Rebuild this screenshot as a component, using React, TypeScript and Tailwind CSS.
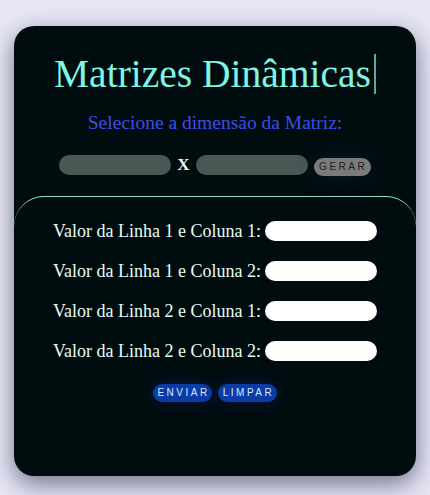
import React from "react";

export default function App() {
  const rows = [
    "Valor da Linha 1 e Coluna 1:",
    "Valor da Linha 1 e Coluna 2:",
    "Valor da Linha 2 e Coluna 1:",
    "Valor da Linha 2 e Coluna 2:",
  ];
  const serif = { fontFamily: '"Liberation Serif", "Times New Roman", serif' };
  const sans = { fontFamily: '"Liberation Sans", Arial, sans-serif' };
  return (
    <div className="min-h-screen bg-[#e6e6f6] px-[14px] pt-[26px]">
      <div className="h-[450px] rounded-[20px] bg-[#010c0f] shadow-[0_8px_24px_rgba(20,20,50,0.55)] flex flex-col items-center">
        <h1
          className="mt-[28px] text-[39.5px] leading-[40px] text-[#7ff5e6] border-r-2 border-[#5fa89c] pr-[3px]"
          style={serif}
        >
          Matrizes Dinâmicas
        </h1>
        <p className="mt-[17px] text-[19.5px] leading-[24px] text-[#3a4fe6]" style={serif}>
          Selecione a dimensão da Matriz:
        </p>
        <div className="mt-[20px] flex items-start">
          <input className="w-[112px] h-[20px] rounded-full bg-[#4b5755] outline-none" />
          <span
            className="mx-[6px] text-[17px] font-bold leading-[20px] text-[#e8fff8]"
            style={serif}
          >
            X
          </span>
          <input className="w-[112px] h-[20px] rounded-full bg-[#4b5755] outline-none" />
          <button
            className="ml-[6px] mt-[3px] w-[57px] h-[18px] rounded-full bg-[#7b7b7b] text-[10px] leading-[18px] tracking-[2.5px] pl-[2px] text-[#1c1c1c] shadow-[0_0_20px_rgba(20,60,90,0.35)]"
            style={sans}
          >
            GERAR
          </button>
        </div>
        <div className="mt-[20px] w-full border-t border-[#8ee0d2] rounded-t-[30px] flex flex-col items-center pt-[24px] gap-[20px]">
          {rows.map((r) => (
            <div key={r} className="flex items-center">
              <span className="text-[18px] leading-[20px] text-[#e4fff4]" style={serif}>
                {r}
              </span>
              <input className="ml-[4px] w-[112px] h-[20px] rounded-full bg-white outline-none" />
            </div>
          ))}
          <div className="mt-[3px] flex gap-[6px]">
            <button
              className="w-[59px] h-[18px] rounded-full bg-[#0b3ba6] text-[10px] leading-[18px] tracking-[2.5px] pl-[2px] text-[#dce8ff] shadow-[0_0_16px_rgba(20,60,160,0.3)]"
              style={sans}
            >
              ENVIAR
            </button>
            <button
              className="w-[59px] h-[18px] rounded-full bg-[#0b3ba6] text-[10px] leading-[18px] tracking-[2.5px] pl-[2px] text-[#dce8ff] shadow-[0_0_16px_rgba(20,60,160,0.3)]"
              style={sans}
            >
              LIMPAR
            </button>
          </div>
        </div>
      </div>
    </div>
  );
}
